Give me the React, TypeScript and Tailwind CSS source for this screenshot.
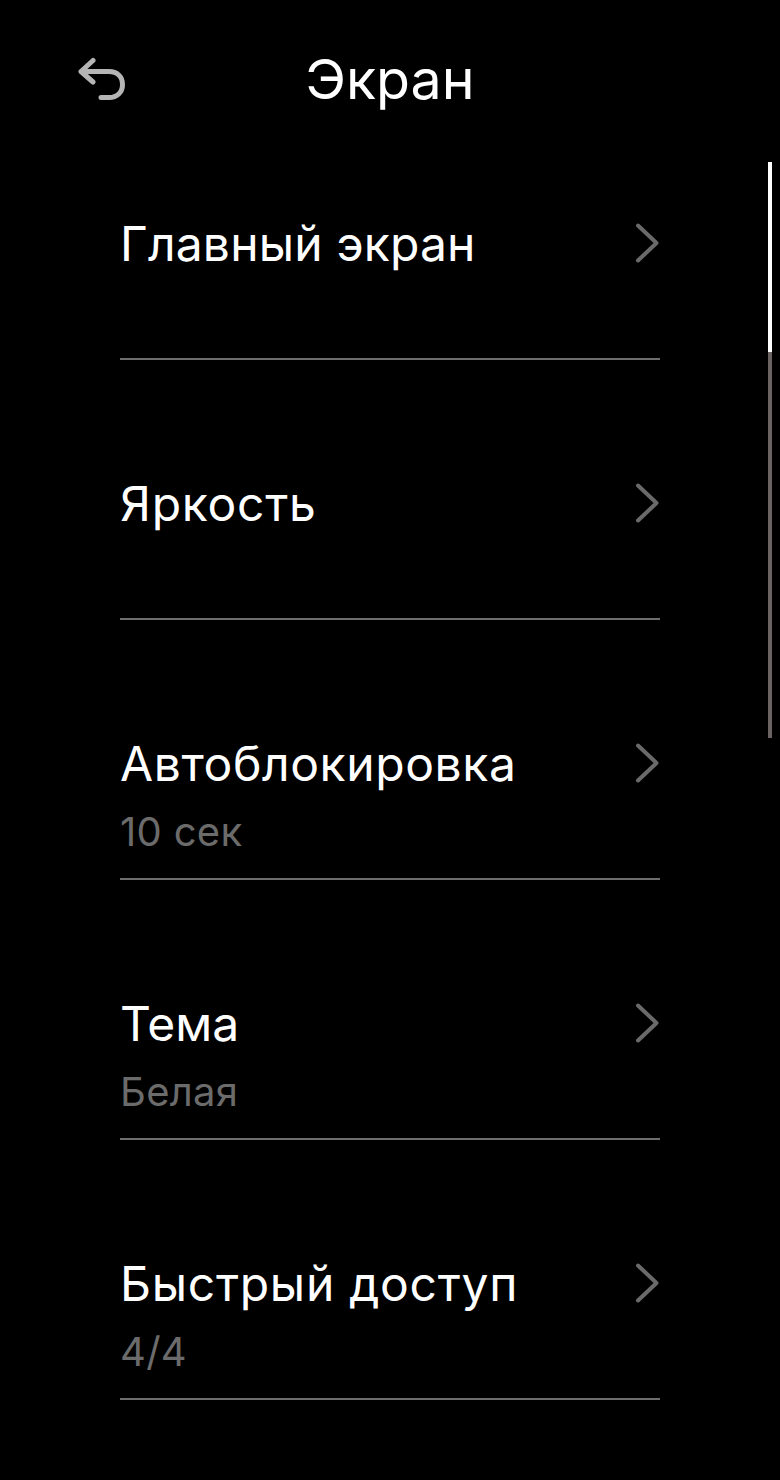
import React from 'react';

type Row = { title: string; sub?: string; tracking: string };

const rows: Row[] = [
  { title: 'Главный экран', tracking: 'tracking-[0.17px]' },
  { title: 'Яркость', tracking: 'tracking-[0.75px]' },
  { title: 'Автоблокировка', sub: '10 сек', tracking: 'tracking-[0.6px]' },
  { title: 'Тема', sub: 'Белая', tracking: 'tracking-normal' },
  { title: 'Быстрый доступ', sub: '4/4', tracking: 'tracking-[0.72px]' },
];

const SettingRow = ({ title, sub, tracking }: Row) => (
  <div className="h-[260px] flex flex-col justify-end">
    <div className="flex items-start justify-between h-[146px]">
      <div>
        <div className={`text-[48px] leading-[68px] text-white -mt-[2px] ${tracking}`}>{title}</div>
        {sub && <div className="text-[40px] leading-[50px] text-[#6b6b6b] tracking-[0.3px] mt-[9px]">{sub}</div>}
      </div>
      <svg width="26" height="40" viewBox="0 0 26 40" fill="none" className="mt-[11px]">
        <path d="M4 2.5 L22.5 20 L4 37.5" stroke="#6a6a6a" strokeWidth="4" strokeLinecap="round" strokeLinejoin="round" />
      </svg>
    </div>
    <div className="h-[2px] bg-[#6e6e6e]" />
  </div>
);

export default function App() {
  return (
    <div className="relative w-[780px] h-[1480px] bg-black overflow-hidden font-['Inter',sans-serif]">
      <header className="relative h-[160px]">
        <svg width="48" height="44" viewBox="0 0 48 44" fill="none" className="absolute left-[78px] top-[57px]">
          <path
            d="M15 3.5 L3 14.5 L15 25 M3 14.5 H31 C39 14.5 44.5 19.5 44.5 27.5 C44.5 35.5 39 40.5 31 40.5 H23"
            stroke="#b5b5b5"
            strokeWidth="5"
            strokeLinecap="round"
            strokeLinejoin="round"
          />
        </svg>
        <h1 className="pt-[44px] text-center text-[55.5px] leading-[70px] font-normal text-white">Экран</h1>
      </header>
      <main className="px-[120px] -mt-[60px]">
        {rows.map((r) => (
          <SettingRow key={r.title} {...r} />
        ))}
      </main>
      <div className="absolute left-[768px] top-[162px] w-[4px] h-[576px] bg-[#6b6264]">
        <div className="w-full h-[190px] bg-white" />
      </div>
    </div>
  );
}
